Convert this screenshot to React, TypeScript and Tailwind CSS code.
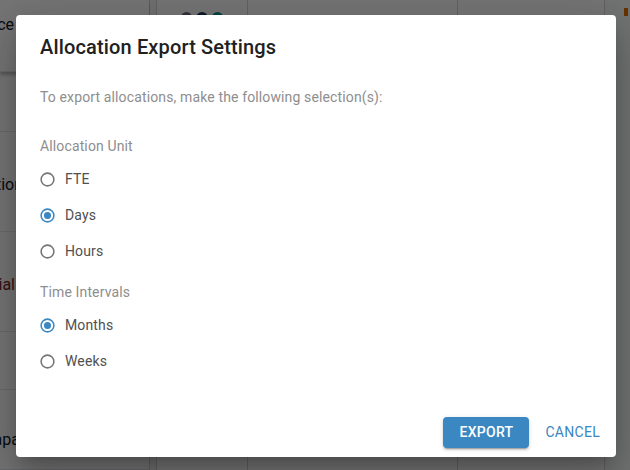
import React, { useState } from 'react';

// Background page rows on the left strip (mostly hidden by the dialog)
const leftRows = [
  { h: 'h-[72px]', label: 'Resource', pr: 'pr-[135px]', align: 'items-start pt-[13px]', color: 'text-gray-900', shadow: true },
  { h: 'h-[60px]', label: '', pr: '', align: 'items-center', color: 'text-gray-900', shadow: false },
  { h: 'h-[100px]', label: 'Allocation', pr: 'pr-[126px]', align: 'items-center pt-[6px]', color: 'text-gray-900', shadow: false },
  { h: 'h-[100px]', label: 'Financial', pr: 'pr-[134px]', align: 'items-center pt-[6px]', color: 'text-[#7a1f1f]', shadow: false },
  { h: 'h-[58px]', label: '', pr: '', align: 'items-center', color: 'text-gray-900', shadow: false },
  { h: 'h-[80px]', label: 'Capacity', pr: 'pr-[104px]', align: 'items-start pt-[38px]', color: 'text-gray-900', shadow: false },
];

const unitOptions = ['FTE', 'Days', 'Hours'];
const intervalOptions = ['Months', 'Weeks'];

const RadioIcon: React.FC<{ checked: boolean }> = ({ checked }) => (
  <svg viewBox="0 0 24 24" className="h-[17px] w-[17px] shrink-0">
    <circle
      cx="12"
      cy="12"
      r="9"
      fill="none"
      stroke={checked ? '#3a87c1' : '#757575'}
      strokeWidth="2.2"
    />
    {checked && <circle cx="12" cy="12" r="5" fill="#3a87c1" />}
  </svg>
);

const RadioRow: React.FC<{ label: string; checked: boolean; onSelect: () => void }> = ({ label, checked, onSelect }) => (
  <label onClick={onSelect} className="-ml-[1.5px] flex h-9 cursor-pointer items-center gap-[9.5px]">
    <RadioIcon checked={checked} />
    <span className="text-[14px] tracking-[0.00938em] text-[#505050]">{label}</span>
  </label>
);

export default function App() {
  const [unit, setUnit] = useState('Days');
  const [interval, setInterval] = useState('Months');

  return (
    <div className="relative flex h-[470px] w-[630px] overflow-hidden bg-white font-['Roboto',sans-serif]">
      {/* Page behind the modal */}
      <div className="flex w-[150px] shrink-0 flex-col border-r border-gray-300">
        {leftRows.map((row, i) => (
          <div
            key={i}
            className={`${row.h} ${row.align} flex shrink-0 justify-end overflow-hidden border-b border-gray-200 ${row.shadow ? 'shadow-[0_3px_3px_rgba(0,0,0,0.25)]' : ''}`}
          >
            <span className={`whitespace-nowrap text-[16px] ${row.pr} ${row.color}`}>{row.label}</span>
          </div>
        ))}
      </div>
      <div className="w-[7px] shrink-0 border-r border-gray-300 bg-gray-100" />
      <div className="flex w-[91px] shrink-0 items-start gap-1 border-r border-gray-300 px-6 pt-3">
        <span className="h-4 w-4 rounded-full bg-gray-500" />
        <span className="h-4 w-4 rounded-full bg-[#1e3a5f]" />
        <span className="h-4 w-4 rounded-full bg-teal-600" />
      </div>
      <div className="w-[210px] shrink-0 border-r border-gray-300" />
      <div className="w-[147px] shrink-0 border-r border-gray-300" />
      <div className="flex-1 bg-gray-50">
        <div className="ml-auto mr-0.5 mt-2 h-2 w-1 bg-amber-600" />
      </div>

      {/* Backdrop */}
      <div className="absolute inset-0 bg-black/[0.54]" />

      {/* Dialog */}
      <div className="absolute left-4 top-[15px] flex h-[442px] w-[600px] flex-col rounded bg-white shadow-[0_11px_15px_-7px_rgba(0,0,0,0.2),0_24px_38px_3px_rgba(0,0,0,0.14),0_9px_46px_8px_rgba(0,0,0,0.12)]">
        <h2 className="px-6 pt-4 text-[20px] font-medium leading-8 tracking-[0.0075em] text-[#212121]">
          Allocation Export Settings
        </h2>

        <div className="flex flex-col px-6">
          <p className="mt-[22px] text-[14px] leading-6 tracking-[0.00938em] text-[#8e8e8e]">
            To export allocations, make the following selection(s):
          </p>

          <p className="mt-[25px] text-[14px] leading-6 tracking-[0.00938em] text-[#8e8e8e]">Allocation Unit</p>
          <div className="mt-[3px] flex flex-col">
            {unitOptions.map(opt => (
              <RadioRow key={opt} label={opt} checked={unit === opt} onSelect={() => setUnit(opt)} />
            ))}
          </div>

          <p className="mt-[11px] text-[14px] leading-6 tracking-[0.00938em] text-[#8e8e8e]">Time Intervals</p>
          <div className="mt-[3px] flex flex-col">
            {intervalOptions.map(opt => (
              <RadioRow key={opt} label={opt} checked={interval === opt} onSelect={() => setInterval(opt)} />
            ))}
          </div>
        </div>

        <div className="mt-auto flex items-center justify-end gap-2 pb-[9px] pr-2">
          <button className="h-[31px] w-[86px] rounded bg-[#3a87c1] text-[14px] font-medium uppercase tracking-[0.02em] text-white shadow-[0_3px_1px_-2px_rgba(0,0,0,0.2),0_2px_2px_0_rgba(0,0,0,0.14),0_1px_5px_0_rgba(0,0,0,0.12)]">
            Export
          </button>
          <button className="h-[31px] px-2 text-[14px] uppercase tracking-[0.02em] text-[#3a87c1]">
            Cancel
          </button>
        </div>
      </div>
    </div>
  );
}
